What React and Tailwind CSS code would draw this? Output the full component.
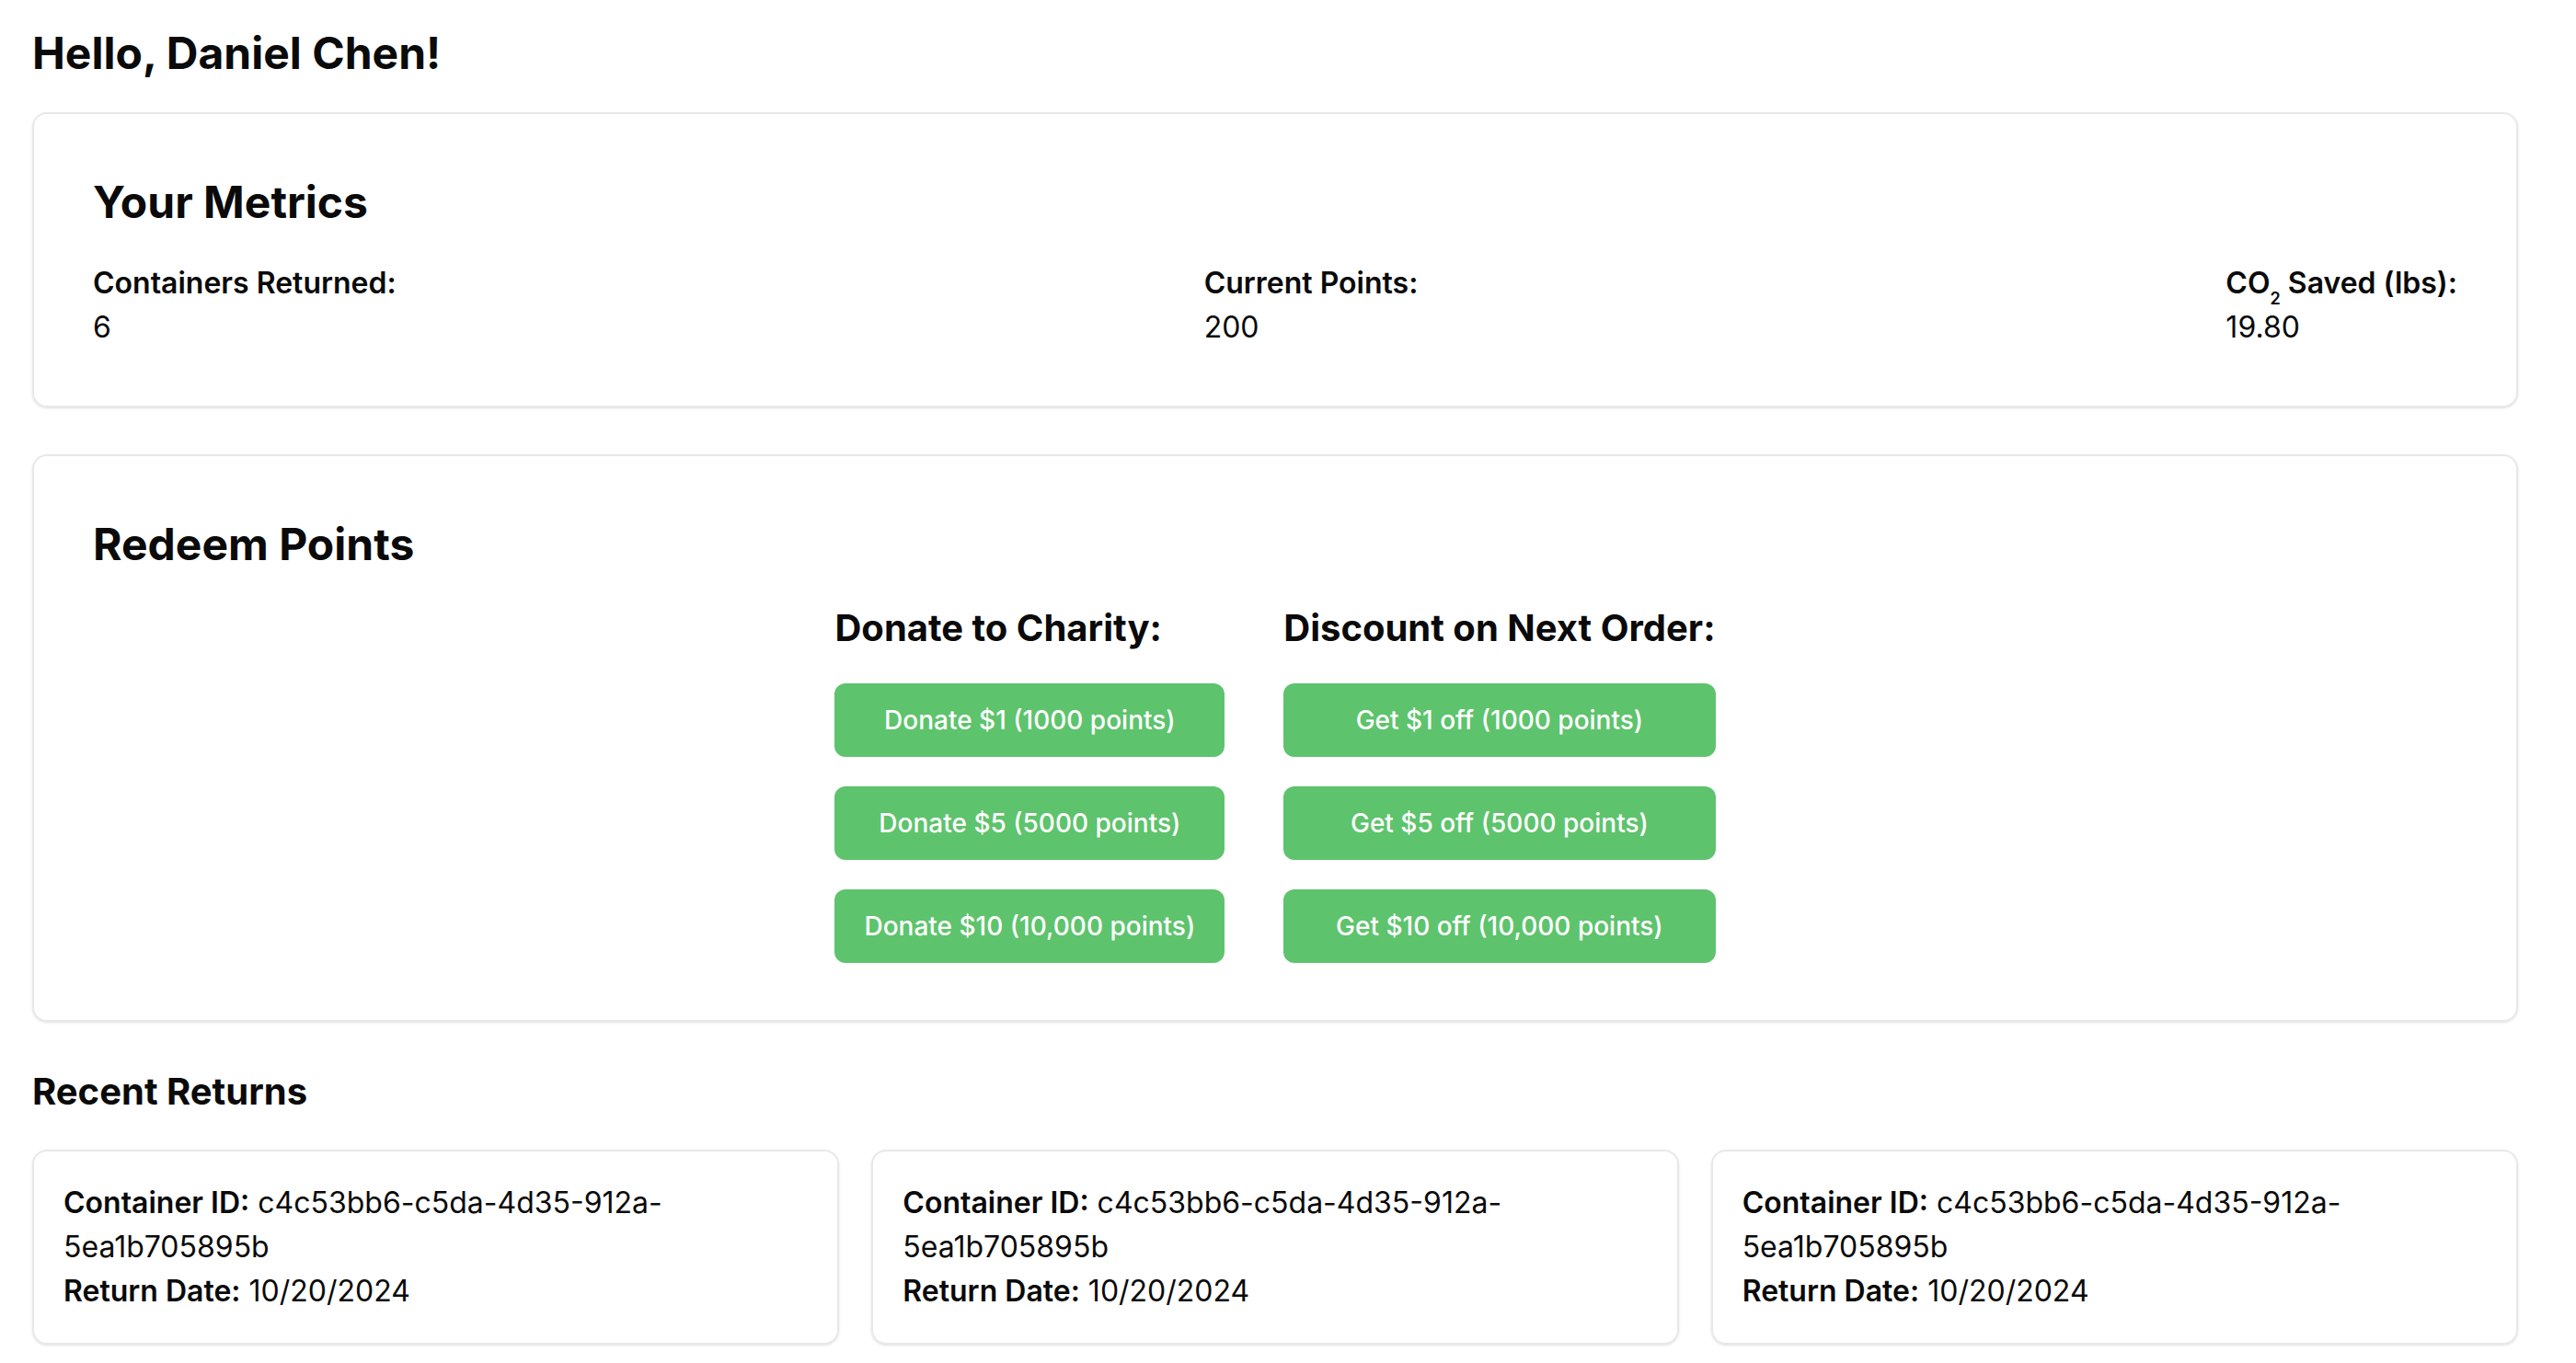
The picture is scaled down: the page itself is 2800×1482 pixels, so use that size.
import React from "react";

const metrics = [
  { label: "Containers Returned:", value: "6" },
  { label: "Current Points:", value: "200" },
  {
    label: (
      <>
        CO<sub className="text-[18px] align-[-7px] leading-none">2</sub> Saved (lbs):
      </>
    ),
    value: "19.80",
  },
];

const donations = [
  "Donate $1 (1000 points)",
  "Donate $5 (5000 points)",
  "Donate $10 (10,000 points)",
];

const discounts = [
  "Get $1 off (1000 points)",
  "Get $5 off (5000 points)",
  "Get $10 off (10,000 points)",
];

const returns = [
  { id: "c4c53bb6-c5da-4d35-912a-5ea1b705895b", date: "10/20/2024" },
  { id: "c4c53bb6-c5da-4d35-912a-5ea1b705895b", date: "10/20/2024" },
  { id: "c4c53bb6-c5da-4d35-912a-5ea1b705895b", date: "10/20/2024" },
];

function RedeemColumn({ title, options }) {
  return (
    <div className="flex flex-col">
      <h3 className="text-[40px] leading-[56px] font-bold mb-[32px]">{title}</h3>
      <div className="flex flex-col gap-[32px]">
        {options.map((opt) => (
          <button
            key={opt}
            className="w-full h-[80px] px-[32px] rounded-[12px] bg-[#5ec36d] text-white text-[28px] font-medium whitespace-nowrap"
          >
            {opt}
          </button>
        ))}
      </div>
    </div>
  );
}

export default function App() {
  return (
    <div
      className="min-h-screen bg-white text-[#0a0a0a] pt-[26px] pl-[35px] pr-[63px] pb-[20px]"
      style={{ fontFamily: "Inter, 'Noto Sans', sans-serif" }}
    >
      <h1 className="text-[48px] leading-[64px] font-bold mb-[32px]">Hello, Daniel Chen!</h1>

      <div className="border-2 border-[#e8e8e8] rounded-[16px] shadow-sm px-[64px] pt-[64px] pb-[61px]">
        <h2 className="text-[48px] leading-[64px] font-bold mb-[32px]">Your Metrics</h2>
        <div className="flex justify-between">
          {metrics.map((m, i) => (
            <div key={i} className="text-[32px] leading-[48px]">
              <p className="font-semibold">{m.label}</p>
              <p>{m.value}</p>
            </div>
          ))}
        </div>
      </div>

      <div className="mt-[51px] border-2 border-[#e8e8e8] rounded-[16px] shadow-sm px-[64px] pt-[64px] pb-[62px]">
        <h2 className="text-[48px] leading-[64px] font-bold mb-[31px]">Redeem Points</h2>
        <div className="flex justify-center gap-[64px]">
          <RedeemColumn title="Donate to Charity:" options={donations} />
          <RedeemColumn title="Discount on Next Order:" options={discounts} />
        </div>
      </div>

      <h2 className="mt-[48px] text-[40px] leading-[56px] font-bold mb-[35px]">Recent Returns</h2>
      <div className="grid grid-cols-3 gap-[35px]">
        {returns.map((r, i) => (
          <div
            key={i}
            className="border-2 border-[#e8e8e8] rounded-[16px] shadow-sm p-[32px] text-[32px] leading-[48px]"
          >
            <p>
              <span className="font-semibold">Container ID:</span> {r.id}
            </p>
            <p>
              <span className="font-semibold">Return Date:</span> {r.date}
            </p>
          </div>
        ))}
      </div>
    </div>
  );
}
